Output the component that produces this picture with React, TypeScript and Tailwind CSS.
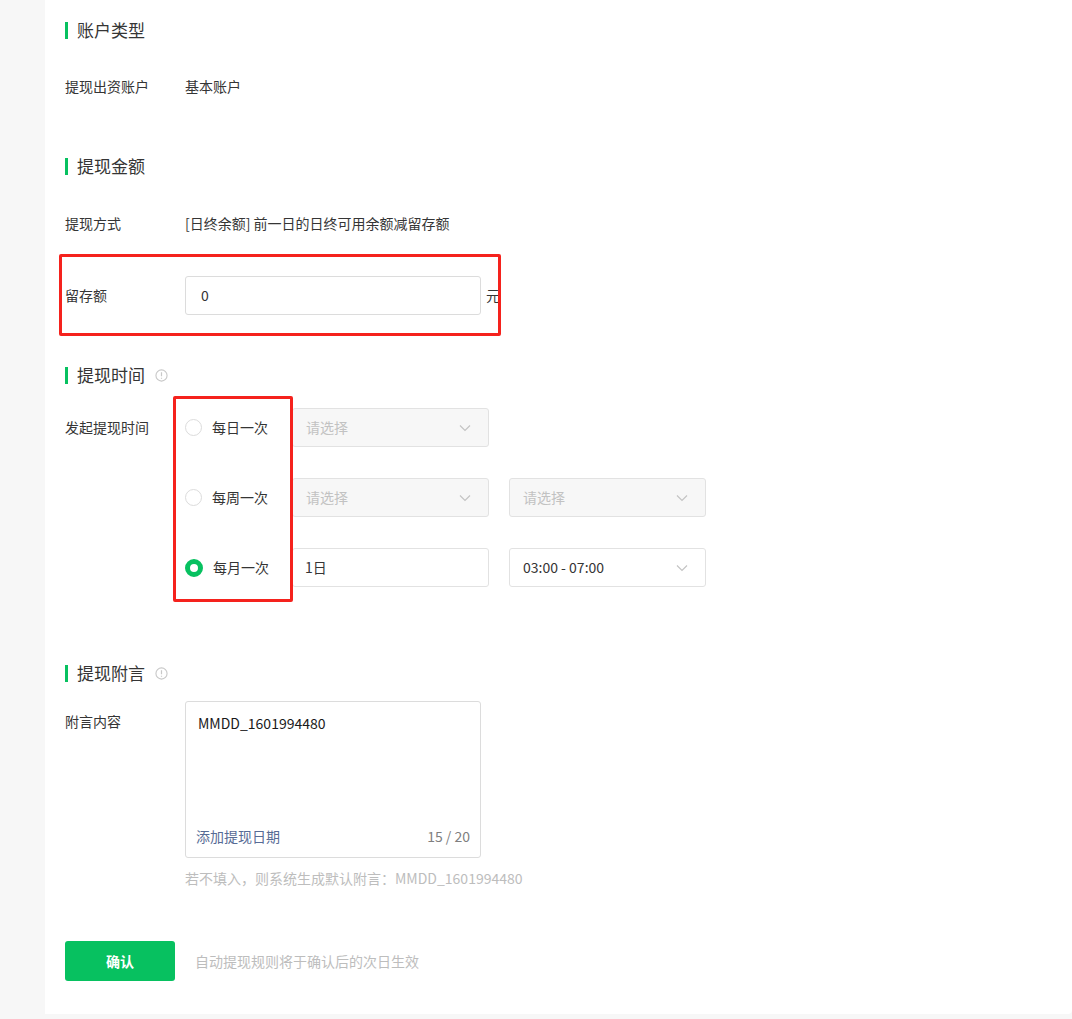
const font = { fontFamily: '"Noto Sans CJK SC", "Liberation Sans", sans-serif' };

function Heading({ title, info }: { title: string; info?: boolean }) {
  return (
    <div className="flex h-[20px] items-center">
      <span className="mr-[9px] h-[17px] w-[3px] bg-[#07c160]" />
      <span className="text-[17px] text-[#353535]">{title}</span>
      {info ? (
        <svg className="ml-[10px]" width="13" height="13" viewBox="0 0 14 14">
          <circle cx="7" cy="7" r="6" fill="none" stroke="#c8c8c8" strokeWidth="1.2" />
          <path d="M7 3.6v4.2M7 9.4v1" stroke="#c8c8c8" strokeWidth="1.3" />
        </svg>
      ) : null}
    </div>
  );
}

function Chevron() {
  return (
    <svg width="12" height="8" viewBox="0 0 12 8">
      <path d="M1 1.5l5 5 5-5" fill="none" stroke="#c4c4c4" strokeWidth="1.2" />
    </svg>
  );
}

function Select({ value, disabled }: { value: string; disabled?: boolean }) {
  return (
    <div
      className={`flex h-[39px] w-[197px] items-center justify-between rounded-[3px] border border-[#e2e2e2] pl-[13px] pr-[17px] text-[14px] ${
        disabled ? 'bg-[#f7f7f7] text-[#c2c2c2]' : 'bg-white text-[#353535]'
      }`}
    >
      <span>{value}</span>
      <Chevron />
    </div>
  );
}

function Radio({ label, checked }: { label: string; checked?: boolean }) {
  return (
    <div className="flex h-[39px] w-[107px] items-center">
      {checked ? (
        <span className="h-[18px] w-[18px] rounded-full border-[5px] border-[#07c160] bg-white" />
      ) : (
        <span className="h-[17px] w-[17px] rounded-full border border-[#dcdcdc] bg-white" />
      )}
      <span className="ml-[10px] text-[14px] text-[#353535]">{label}</span>
    </div>
  );
}

export default function App() {
  return (
    <div style={font} className="min-h-[1019px] bg-[#f7f7f7]">
      <div className="ml-[45px] h-[1014px] rounded-br-[4px] bg-white pl-[20px] pt-[20px] text-[14px] text-[#353535]">
        <Heading title="账户类型" />
        <div className="mt-[36px] flex h-[20px] items-center">
          <span className="w-[120px]">提现出资账户</span>
          <span>基本账户</span>
        </div>

        <div className="mt-[60px]">
          <Heading title="提现金额" />
        </div>
        <div className="mt-[37px] flex h-[20px] items-center">
          <span className="w-[120px]">提现方式</span>
          <span>[日终余额] 前一日的日终可用余额减留存额</span>
        </div>
        <div className="relative mt-[43px] flex h-[39px] items-center">
          <div className="absolute left-[-6px] top-[-22px] h-[82px] w-[442px] rounded-[2px] border-[3px] border-[#f5221d]" />
          <span className="w-[120px]">留存额</span>
          <div className="flex h-[39px] w-[296px] items-center rounded-[3px] border border-[#dcdcdc] px-[15px]">0</div>
          <span className="ml-[5px]">元</span>
        </div>

        <div className="mt-[50px]">
          <Heading title="提现时间" info />
        </div>
        <div className="relative mt-[23px] flex">
          <div className="absolute left-[108px] top-[-12px] h-[206px] w-[120px] rounded-[2px] border-[3px] border-[#f5221d]" />
          <span className="w-[120px] pt-[9px]">发起提现时间</span>
          <div className="flex flex-col gap-[31px]">
            <div className="flex">
              <Radio label="每日一次" />
              <Select value="请选择" disabled />
            </div>
            <div className="flex gap-[20px]">
              <div className="flex">
                <Radio label="每周一次" />
                <Select value="请选择" disabled />
              </div>
              <Select value="请选择" disabled />
            </div>
            <div className="flex gap-[20px]">
              <div className="flex">
                <Radio label="每月一次" checked />
                <div className="flex h-[39px] w-[197px] items-center rounded-[3px] border border-[#e2e2e2] pl-[12px]">1日</div>
              </div>
              <Select value="03:00 - 07:00" />
            </div>
          </div>
        </div>

        <div className="mt-[76px]">
          <Heading title="提现附言" info />
        </div>
        <div className="mt-[18px] flex">
          <span className="w-[120px] pt-[10px]">附言内容</span>
          <div>
            <div className="flex h-[157px] w-[296px] flex-col justify-between rounded-[3px] border border-[#dcdcdc] px-[10px] pb-[10px] pt-[11px]">
              <span className="pl-[2px] text-[#1a1a1a]">MMDD_1601994480</span>
              <div className="flex justify-between text-[14px]">
                <span className="text-[#576b95]">添加提现日期</span>
                <span className="text-[#7f7f7f]">15 / 20</span>
              </div>
            </div>
            <div className="mt-[10px] text-[14px] text-[#bdbdbd]">若不填入，则系统生成默认附言：MMDD_1601994480</div>
          </div>
        </div>

        <div className="mt-[52px] flex items-center">
          <button className="h-[40px] w-[110px] rounded-[3px] bg-[#07c160] text-[14px] font-bold text-white">确认</button>
          <span className="ml-[20px] text-[#bdbdbd]">自动提现规则将于确认后的次日生效</span>
        </div>
      </div>
    </div>
  );
}
